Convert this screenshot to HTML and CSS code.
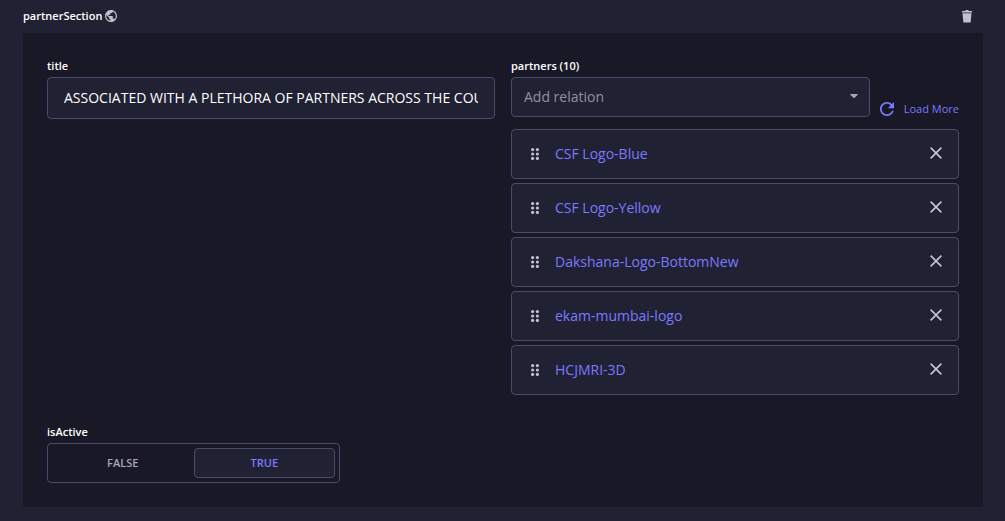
FILE: index.html
```html
<!DOCTYPE html>
<html lang="en">
<head>
<meta charset="utf-8">
<meta name="viewport" content="width=device-width, initial-scale=1">
<title>partnerSection</title>
<link rel="stylesheet" href="styles.css">
</head>
<body>
<svg width="0" height="0" class="sprite" aria-hidden="true">
  <symbol id="drag" viewBox="0 0 8 12">
    <circle cx="1.6" cy="1.6" r="1.6"/><circle cx="6.4" cy="1.6" r="1.6"/>
    <circle cx="1.6" cy="6" r="1.6"/><circle cx="6.4" cy="6" r="1.6"/>
    <circle cx="1.6" cy="10.4" r="1.6"/><circle cx="6.4" cy="10.4" r="1.6"/>
  </symbol>
  <symbol id="cross" viewBox="0 0 24 24">
    <path d="M24 2.417L21.583 0 12 9.583 2.417 0 0 2.417 9.583 12 0 21.583 2.417 24 12 14.417 21.583 24 24 21.583 14.417 12 24 2.417z"/>
  </symbol>
</svg>
<section class="component">
  <header class="component-header">
    <h2 class="component-title">partnerSection
      <svg class="globe" viewBox="2 2 20 20" aria-hidden="true"><path d="M12 2C6.480 2 2 6.480 2 12s4.480 10 10 10 10-4.480 10-10S17.520 2 12 2zm-1 17.930c-3.950-.490-7-3.850-7-7.930 0-.620.080-1.210.210-1.790L9 15v1c0 1.100.900 2 2 2v1.930zm6.900-2.540c-.260-.810-1-1.390-1.900-1.390h-1v-3c0-.550-.450-1-1-1H8v-2h2c.550 0 1-.450 1-1V7h2c1.100 0 2-.900 2-2v-.410c2.930 1.190 5 4.060 5 7.410 0 2.080-.800 3.970-2.100 5.390z"/></svg>
    </h2>
    <button class="icon-button" type="button" aria-label="Delete partnerSection">
      <svg class="trash" viewBox="0 0 12 13" aria-hidden="true"><path d="M1 1h3l1-1h2l1 1h3v1.500H1zM1.500 3.200h9L9.600 12.500H2.400z"/></svg>
    </button>
  </header>
  <form class="panel">
    <div class="field">
      <label class="label" for="title">title</label>
      <input class="text-input" id="title" type="text" value="ASSOCIATED WITH A PLETHORA OF PARTNERS ACROSS THE COUNTRY">
    </div>
    <div class="field">
      <label class="label" for="partners">partners (10)</label>
      <div class="relation-bar">
        <div class="select-wrap">
          <select class="select" id="partners"><option>Add relation</option></select>
          <svg class="caret" viewBox="0 0 8 5" aria-hidden="true"><path d="M.5 0h7Q8 .5 7.500 1L4.600 3.800Q4 4.300 3.400 3.800L.5 1Q0 .5.5 0z"/></svg>
        </div>
        <button class="load-more" type="button">
          <svg class="reload" viewBox="4 4 16 16" aria-hidden="true"><path d="M17.650 6.350C16.200 4.900 14.210 4 12 4c-4.420 0-7.990 3.580-7.990 8s3.570 8 7.990 8c3.730 0 6.840-2.550 7.730-6h-2.080c-.820 2.330-3.040 4-5.650 4-3.310 0-6-2.690-6-6s2.690-6 6-6c1.660 0 3.140.690 4.220 1.780L13 11h7V4l-2.350 2.350z"/></svg>
          Load More
        </button>
      </div>
      <ul class="relations">
        <li class="relation">
          <button class="drag" type="button" aria-label="Drag"><svg viewBox="0 0 8 12"><use href="#drag"/></svg></button>
          <a class="relation-link" href="#blue">CSF Logo-Blue</a>
          <button class="remove" type="button" aria-label="Remove"><svg viewBox="0 0 24 24"><use href="#cross"/></svg></button>
        </li>
        <li class="relation">
          <button class="drag" type="button" aria-label="Drag"><svg viewBox="0 0 8 12"><use href="#drag"/></svg></button>
          <a class="relation-link" href="#yellow">CSF Logo-Yellow</a>
          <button class="remove" type="button" aria-label="Remove"><svg viewBox="0 0 24 24"><use href="#cross"/></svg></button>
        </li>
        <li class="relation">
          <button class="drag" type="button" aria-label="Drag"><svg viewBox="0 0 8 12"><use href="#drag"/></svg></button>
          <a class="relation-link" href="#dakshana">Dakshana-Logo-BottomNew</a>
          <button class="remove" type="button" aria-label="Remove"><svg viewBox="0 0 24 24"><use href="#cross"/></svg></button>
        </li>
        <li class="relation">
          <button class="drag" type="button" aria-label="Drag"><svg viewBox="0 0 8 12"><use href="#drag"/></svg></button>
          <a class="relation-link" href="#ekam">ekam-mumbai-logo</a>
          <button class="remove" type="button" aria-label="Remove"><svg viewBox="0 0 24 24"><use href="#cross"/></svg></button>
        </li>
        <li class="relation">
          <button class="drag" type="button" aria-label="Drag"><svg viewBox="0 0 8 12"><use href="#drag"/></svg></button>
          <a class="relation-link" href="#hcjmri">HCJMRI-3D</a>
          <button class="remove" type="button" aria-label="Remove"><svg viewBox="0 0 24 24"><use href="#cross"/></svg></button>
        </li>
      </ul>
    </div>
    <fieldset class="field toggle-field">
      <legend class="label">isActive</legend>
      <div class="toggle">
        <label class="toggle-option"><input class="toggle-input" type="radio" name="isActive" value="false">FALSE</label>
        <label class="toggle-option"><input class="toggle-input" type="radio" name="isActive" value="true" checked>TRUE</label>
      </div>
    </fieldset>
  </form>
</section>
</body>
</html>
```
FILE: styles.css
```css
:root {
  --surface: #212134;
  --panel: #181826;
  --border: #4a4a6a;
  --icon: #c0c0cf;
  --muted: #a5a5ba;
  --primary: #7b79ff;
}

* {
  box-sizing: border-box;
}

body {
  margin: 0;
  background: var(--surface);
  color: #fff;
  font-family: "Segoe UI", "Open Sans", "Noto Sans", sans-serif;
  font-size: 14px;
  line-height: 20px;
}

button,
input,
select {
  font: inherit;
}

button {
  padding: 0;
  border: 0;
  background: none;
  color: inherit;
  cursor: pointer;
}

svg {
  display: block;
  flex: none;
  fill: currentColor;
}

.sprite {
  position: absolute;
}

.component {
  padding: 0 22px 14px 23px;
}

.component-header {
  display: flex;
  align-items: center;
  justify-content: space-between;
  height: 33px;
  padding-right: 10px;
}

.component-title {
  display: flex;
  align-items: center;
  gap: 3px;
  margin: 0;
  padding-bottom: 2px;
  font-size: 11px;
  font-weight: 600;
  line-height: 16px;
}

.globe {
  width: 12px;
  height: 12px;
  color: var(--icon);
}

.icon-button {
  color: var(--icon);
}

.trash {
  width: 12px;
  height: 13px;
}

.panel {
  display: grid;
  grid-template-columns: repeat(2, minmax(0, 1fr));
  gap: 28px 16px;
  padding: 24px;
  background: var(--panel);
}

.field {
  min-width: 0;
  margin: 0;
  padding: 0;
  border: 0;
}

.label {
  display: block;
  margin-bottom: 2px;
  padding: 0;
  font-size: 11px;
  font-weight: 600;
  line-height: 18px;
}

.text-input {
  display: block;
  width: 100%;
  height: 42px;
  padding: 0 16px 2px;
  border: 1px solid var(--border);
  border-radius: 4px;
  background: var(--surface);
  color: #fff;
}

.relation-bar {
  display: flex;
  align-items: flex-end;
  gap: 10px;
}

.select-wrap {
  position: relative;
  flex: 1;
}

.select {
  display: block;
  appearance: none;
  width: 100%;
  height: 40px;
  padding: 0 32px 0 12px;
  border: 1px solid var(--border);
  border-radius: 4px;
  background: var(--surface);
  color: #9090a3;
}

.caret {
  position: absolute;
  top: 17px;
  right: 12px;
  width: 8px;
  height: 5px;
  color: var(--muted);
  pointer-events: none;
}

.load-more {
  display: flex;
  align-items: center;
  gap: 10px;
  color: var(--primary);
  font-size: 11px;
  line-height: 16px;
}

.reload {
  width: 14px;
  height: 14px;
}

.relations {
  display: grid;
  gap: 4px;
  margin: 12px 0 0;
  padding: 0;
  list-style: none;
}

.relation {
  display: flex;
  align-items: center;
  height: 50px;
  padding: 0 16px 0 19px;
  border: 1px solid var(--border);
  border-radius: 4px;
  background: var(--surface);
  color: var(--icon);
}

.drag svg {
  width: 8px;
  height: 12px;
}

.relation-link {
  flex: 1;
  margin-left: 16px;
  color: var(--primary);
  text-decoration: none;
}

.remove {
  padding-bottom: 2px;
}

.remove svg {
  width: 12px;
  height: 12px;
}

.toggle-field {
  max-width: 293px;
}

.toggle {
  display: flex;
  height: 40px;
  padding: 4px;
  border: 1px solid var(--border);
  border-radius: 4px;
}

.toggle-option {
  display: flex;
  flex: 1;
  align-items: center;
  justify-content: center;
  border: 1px solid transparent;
  border-radius: 4px;
  color: var(--muted);
  font-size: 11px;
  font-weight: 600;
  line-height: 16px;
  cursor: pointer;
}

.toggle-option:has(:checked) {
  border-color: var(--border);
  background: var(--surface);
  color: var(--primary);
}

.toggle-input {
  position: absolute;
  appearance: none;
  margin: 0;
}
```
